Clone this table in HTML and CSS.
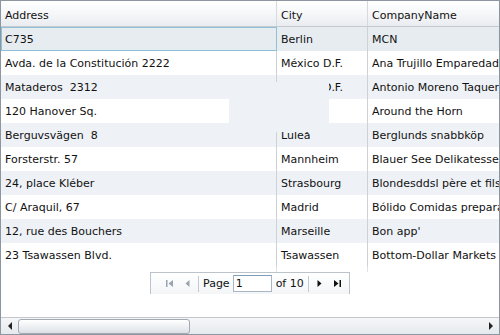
FILE: index.html
```html
<!DOCTYPE html>
<html>
    <head>
        <link rel="stylesheet" href="styles.css">
    </head>
    <body>
        <div class="grid">
            <div class="grid-body">
                <div class="row head">
                    <div class="cell c-address">Address</div>
                    <div class="cell c-city">City</div>
                    <div class="cell c-company">CompanyName</div>
                </div>
                <div class="row odd current">
                    <div class="cell c-address">C735</div>
                    <div class="cell c-city">Berlin</div>
                    <div class="cell c-company">MCN</div>
                </div>
                <div class="row">
                    <div class="cell c-address">Avda. de la Constitución 2222</div>
                    <div class="cell c-city">México D.F.</div>
                    <div class="cell c-company">Ana Trujillo Emparedados y helados</div>
                </div>
                <div class="row odd">
                    <div class="cell c-address">Mataderos&nbsp; 2312</div>
                    <div class="cell c-city">México D.F.</div>
                    <div class="cell c-company">Antonio Moreno Taquería</div>
                </div>
                <div class="row">
                    <div class="cell c-address">120 Hanover Sq.</div>
                    <div class="cell c-city">London</div>
                    <div class="cell c-company">Around the Horn</div>
                </div>
                <div class="row odd">
                    <div class="cell c-address">Berguvsvägen&nbsp; 8</div>
                    <div class="cell c-city">Luleå</div>
                    <div class="cell c-company">Berglunds snabbköp</div>
                </div>
                <div class="row">
                    <div class="cell c-address">Forsterstr. 57</div>
                    <div class="cell c-city">Mannheim</div>
                    <div class="cell c-company">Blauer See Delikatessen</div>
                </div>
                <div class="row odd">
                    <div class="cell c-address">24, place Kléber</div>
                    <div class="cell c-city">Strasbourg</div>
                    <div class="cell c-company">Blondesddsl père et fils</div>
                </div>
                <div class="row">
                    <div class="cell c-address">C/ Araquil, 67</div>
                    <div class="cell c-city">Madrid</div>
                    <div class="cell c-company">Bólido Comidas preparadas</div>
                </div>
                <div class="row odd">
                    <div class="cell c-address">12, rue des Bouchers</div>
                    <div class="cell c-city">Marseille</div>
                    <div class="cell c-company">Bon app'</div>
                </div>
                <div class="row">
                    <div class="cell c-address">23 Tsawassen Blvd.</div>
                    <div class="cell c-city">Tsawassen</div>
                    <div class="cell c-company">Bottom-Dollar Markets</div>
                </div>
                <div class="row tail">
                    <div class="cell c-address"></div>
                    <div class="cell c-city"></div>
                    <div class="cell c-company"></div>
                </div>

                <div class="pager-wrap">
                    <div class="pager">
                        <span class="pbtn">
                            <svg width="9" height="9" viewBox="0 0 9 9"><rect x="1" y="1" width="1.5" height="7" fill="#9aa3ad"/><path d="M8 1 L3.5 4.5 L8 8 Z" fill="#9aa3ad"/></svg>
                        </span>
                        <span class="pbtn">
                            <svg width="9" height="9" viewBox="0 0 9 9"><path d="M6.5 1 L2.5 4.5 L6.5 8 Z" fill="#9aa3ad"/></svg>
                        </span>
                        <span class="psep"></span>
                        <span class="plabel">Page</span>
                        <span class="pinput">1</span>
                        <span class="plabel">of 10</span>
                        <span class="psep"></span>
                        <span class="pbtn">
                            <svg width="9" height="9" viewBox="0 0 9 9"><path d="M2.5 1 L6.5 4.5 L2.5 8 Z" fill="#111"/></svg>
                        </span>
                        <span class="pbtn">
                            <svg width="9" height="9" viewBox="0 0 9 9"><path d="M1 1 L5.5 4.5 L1 8 Z" fill="#111"/><rect x="6.5" y="1" width="1.5" height="7" fill="#111"/></svg>
                        </span>
                    </div>
                </div>

                <div class="paint-glitch"></div>
            </div>

            <div class="hscroll">
                <span class="arrow">
                    <svg width="6" height="8" viewBox="0 0 6 8"><path d="M5 0 L1 4 L5 8 Z" fill="#222"/></svg>
                </span>
                <div class="track">
                    <div class="thumb"></div>
                </div>
                <span class="arrow">
                    <svg width="6" height="8" viewBox="0 0 6 8"><path d="M1 0 L5 4 L1 8 Z" fill="#222"/></svg>
                </span>
            </div>
        </div>
    </body>
</html>
```

FILE: styles.css
```css
* {
    box-sizing: border-box;
}

body {
    margin: 0;
    background: #ffffff;
    font-family: "DejaVu Sans", Verdana, sans-serif;
    font-size: 11px;
    color: #111;
}

.grid {
    width: 500px;
    height: 335px;
    border: 1px solid #8c96a0;
    display: flex;
    flex-direction: column;
    overflow: hidden;
}

.grid-body {
    position: relative;
    flex: 1;
    overflow: hidden;
}

.row {
    display: flex;
    height: 24px;
    background: #ffffff;
}

.row.odd {
    background: #eef1f6;
}

.row.head {
    height: 26px;
    background: linear-gradient(#ffffff, #f6f7f9 50%, #e9ecf0);
    border-bottom: 1px solid #c5cad1;
}

.cell {
    flex-shrink: 0;
    padding-left: 4px;
    display: flex;
    align-items: center;
    white-space: nowrap;
    overflow: hidden;
    border-right: 1px solid #cdd2d8;
}

.head .cell {
    padding-top: 3px;
    border-right-color: #d6dade;
}

.c-address {
    width: 276px;
}

.c-city {
    width: 91px;
}

.c-company {
    width: 140px;
    border-right: none;
}

.row.current {
    background: #e7ecf1;
}

.row.current .c-address {
    border: 1px solid #8ec1d6;
    padding-left: 3px;
}

.row.tail {
    height: 5px;
    background: transparent;
}

.row.tail .cell {
    border-right-color: #dfe2e6;
}

.pager-wrap {
    display: flex;
    justify-content: center;
}

.pager {
    width: 200px;
    height: 22px;
    display: flex;
    align-items: center;
    padding-left: 9px;
    white-space: nowrap;
    border: 1px solid #bcc3cb;
    border-bottom: none;
    background: linear-gradient(#ffffff, #f3f5f7);
}

.pbtn {
    width: 18px;
    height: 18px;
    flex-shrink: 0;
    display: flex;
    align-items: center;
    justify-content: center;
}

.psep {
    width: 1px;
    height: 16px;
    flex-shrink: 0;
    background: #c3c9d0;
    margin: 0 2px;
}

.plabel {
    padding: 0 2px;
    flex-shrink: 0;
}

.pinput {
    width: 39px;
    height: 17px;
    flex-shrink: 0;
    margin: 0 2px 0 1px;
    padding-left: 2px;
    border: 1px solid #aab6c4;
    border-top-color: #7f9db9;
    background: #ffffff;
    line-height: 15px;
}

.paint-glitch {
    position: absolute;
    left: 228px;
    top: 81px;
    width: 100px;
    height: 50px;
    background: #eef1f6;
}

.hscroll {
    height: 17px;
    display: flex;
    align-items: center;
    border-top: 1px solid #c3c7cc;
    background: linear-gradient(#f5f6f8, #e6e9ed);
}

.arrow {
    width: 17px;
    display: flex;
    justify-content: center;
}

.track {
    flex: 1;
    height: 15px;
}

.thumb {
    width: 172px;
    height: 15px;
    border: 1px solid #a3a9b1;
    border-radius: 3px;
    background: linear-gradient(#ffffff, #eef0f3 50%, #dde1e6);
}
```
